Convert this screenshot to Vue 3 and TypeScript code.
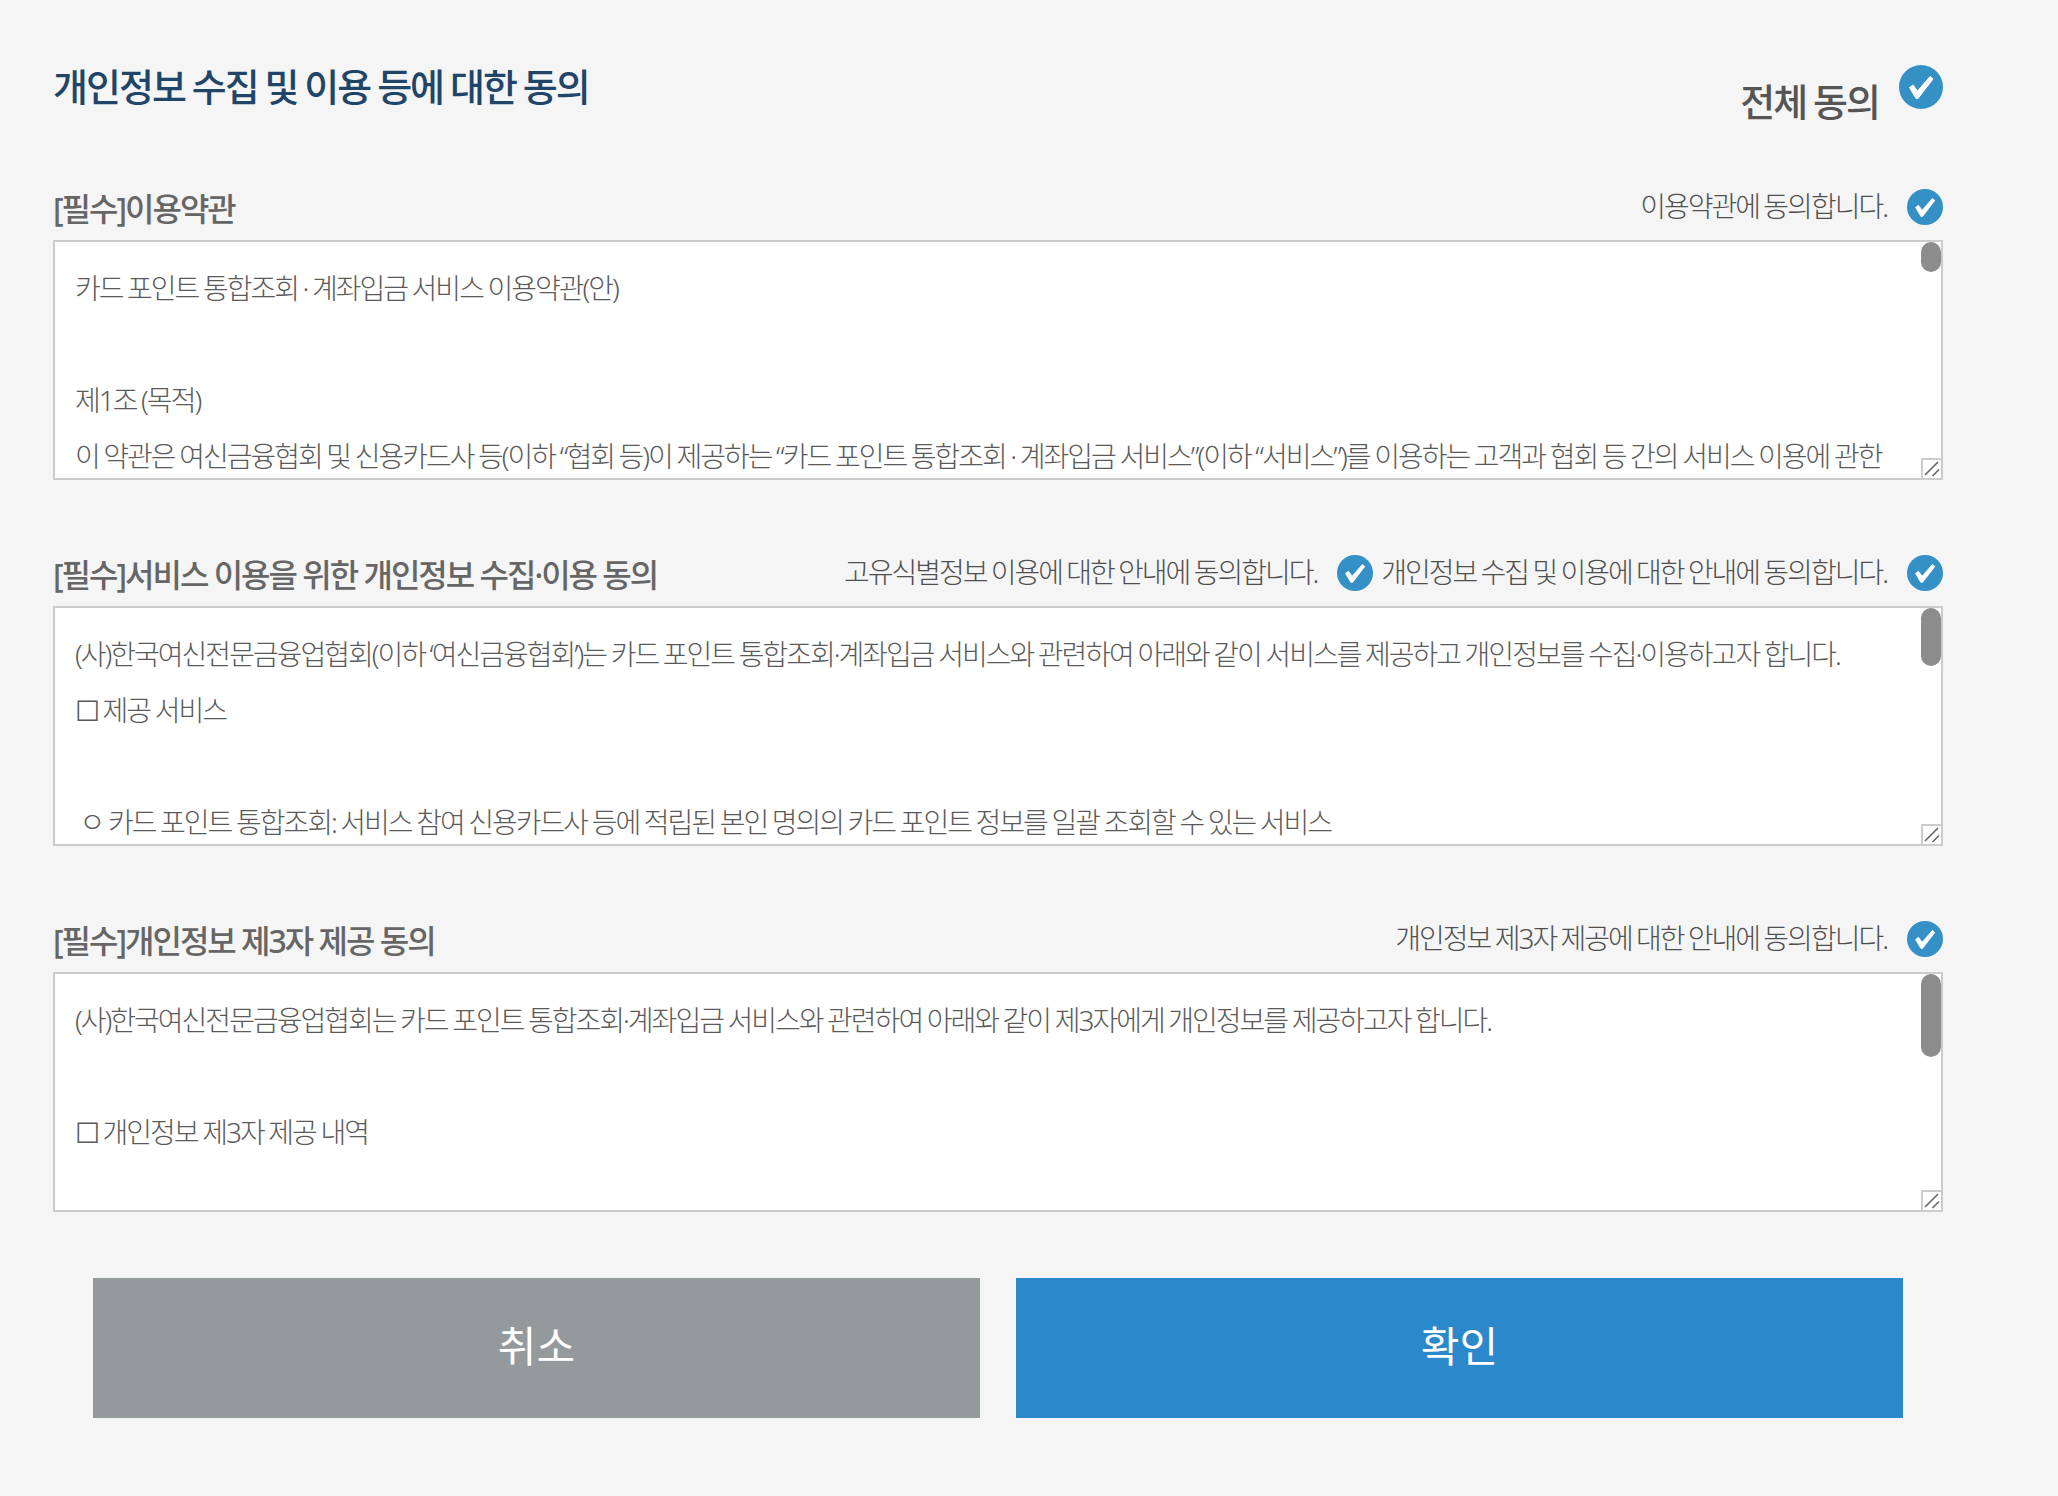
<script setup lang="ts">
interface Agree { text: string }
interface Section { title: string; agrees: Agree[]; lines: string[]; thumb: number }
const sections: Section[] = [
  {
    title: '[필수]이용약관',
    agrees: [{ text: '이용약관에 동의합니다.' }],
    thumb: 30,
    lines: [
      '카드 포인트 통합조회 · 계좌입금 서비스 이용약관(안)',
      '',
      '제1조 (목적)',
      '이 약관은 여신금융협회 및 신용카드사 등(이하 “협회 등)이 제공하는 “카드 포인트 통합조회 · 계좌입금 서비스”(이하 “서비스”)를 이용하는 고객과 협회 등 간의 서비스 이용에 관한',
    ],
  },
  {
    title: '[필수]서비스 이용을 위한 개인정보 수집·이용 동의',
    agrees: [{ text: '고유식별정보 이용에 대한 안내에 동의합니다.' }, { text: '개인정보 수집 및 이용에 대한 안내에 동의합니다.' }],
    thumb: 58,
    lines: [
      "(사)한국여신전문금융업협회(이하 ‘여신금융협회’)는 카드 포인트 통합조회·계좌입금 서비스와 관련하여 아래와 같이 서비스를 제공하고 개인정보를 수집·이용하고자 합니다.",
      '☐ 제공 서비스',
      '',
      ' ㅇ 카드 포인트 통합조회: 서비스 참여 신용카드사 등에 적립된 본인 명의의 카드 포인트 정보를 일괄 조회할 수 있는 서비스',
    ],
  },
  {
    title: '[필수]개인정보 제3자 제공 동의',
    agrees: [{ text: '개인정보 제3자 제공에 대한 안내에 동의합니다.' }],
    thumb: 83,
    lines: [
      '(사)한국여신전문금융업협회는 카드 포인트 통합조회·계좌입금 서비스와 관련하여 아래와 같이 제3자에게 개인정보를 제공하고자 합니다.',
      '',
      '☐ 개인정보 제3자 제공 내역',
    ],
  },
]
</script>

<template>
  <div class="page">
    <header class="top">
      <h1 class="title">개인정보 수집 및 이용 등에 대한 동의</h1>
      <div class="all">
        <span class="all-label">전체 동의</span>
        <svg class="check big" viewBox="0 0 44 44" aria-hidden="true">
          <circle cx="22" cy="22" r="22" fill="#3590c6" />
          <path d="M10.5 22.5 L14 20 L18.5 26 L31 11.5 L34 14 L19 33.5 L17 33.5 Z" fill="#fff" stroke="#fff" stroke-width="1" stroke-linejoin="round" />
        </svg>
      </div>
    </header>
    <section v-for="s in sections" :key="s.title" class="section">
      <div class="head">
        <h2 class="label">{{ s.title }}</h2>
        <div class="agrees">
          <div v-for="a in s.agrees" :key="a.text" class="agree">
            <span>{{ a.text }}</span>
            <svg class="check" viewBox="0 0 44 44" aria-hidden="true">
              <circle cx="22" cy="22" r="22" fill="#3590c6" />
              <path d="M10.5 22.5 L14 20 L18.5 26 L31 11.5 L34 14 L19 33.5 L17 33.5 Z" fill="#fff" stroke="#fff" stroke-width="1" stroke-linejoin="round" />
            </svg>
          </div>
        </div>
      </div>
      <div class="box">
        <p v-for="(l, i) in s.lines" :key="i" class="line">{{ l }}</p>
        <span class="thumb" :style="{ height: s.thumb + 'px' }"></span>
        <span class="resizer">
          <svg viewBox="0 0 18 18" width="18" height="18" aria-hidden="true">
            <path d="M2 15 L15 2 M9.5 16 L16 9.5" stroke="#666" stroke-width="1.6" fill="none" />
          </svg>
        </span>
      </div>
    </section>
    <div class="buttons">
      <button class="btn cancel" type="button">취소</button>
      <button class="btn ok" type="button">확인</button>
    </div>
  </div>
</template>

<style scoped>
.page {
  width: 2058px;
  height: 1496px;
  box-sizing: border-box;
  padding: 0 115px 0 53px;
  background: #f5f5f5;
  font-family: "Noto Sans", "Noto Sans CJK KR", sans-serif;
  overflow: hidden;
}
.top {
  display: flex;
  justify-content: space-between;
  height: 114px;
  padding-top: 56px;
  box-sizing: border-box;
}
.title {
  margin: 0;
  font-size: 38px;
  line-height: 60px;
  height: 60px;
  font-weight: 500;
  letter-spacing: -2px;
  word-spacing: -1px;
  color: #1f4568;
}
.all {
  display: flex;
  align-items: flex-start;
  gap: 20px;
  margin-top: 9px;
}
.all-label {
  font-size: 38px;
  line-height: 54px;
  margin-top: 9px;
  font-weight: 500;
  letter-spacing: -2px;
  word-spacing: -1px;
  color: #555;
}
.section { display: block; }
.head {
  display: flex;
  justify-content: space-between;
  align-items: flex-end;
  height: 126px;
  padding-bottom: 14px;
  box-sizing: border-box;
}
.label {
  margin: 0 0 -6px;
  font-size: 32px;
  line-height: 46px;
  font-weight: 500;
  letter-spacing: -2px;
  color: #666;
}
.agrees { display: flex; gap: 8px; }
.agree {
  display: flex;
  align-items: center;
  gap: 20px;
  font-size: 28px;
  line-height: 40px;
  letter-spacing: -2px;
  word-spacing: -1px;
  font-weight: 300;
  color: #4f4f4f;
}
.agree span { margin-top: -1px; }
.check { width: 36px; height: 36px; flex: none; position: relative; top: 0; }
.check.big { width: 44px; height: 44px; top: 0; }
.box {
  position: relative;
  height: 240px;
  box-sizing: border-box;
  border: 2px solid #ccc;
  background: #fff;
  padding: 18px 20px 0;
  overflow: hidden;
}
.line {
  margin: 0;
  height: 56px;
  line-height: 56px;
  font-size: 28px;
  font-weight: 300;
  letter-spacing: -2px;
  word-spacing: -0.7px;
  color: #5a5a5a;
  white-space: pre;
}
.thumb {
  position: absolute;
  top: 0;
  right: 0;
  width: 20px;
  border-radius: 10px;
  background: #8c8c8c;
}
.resizer {
  position: absolute;
  right: 0;
  bottom: 0;
  width: 20px;
  height: 20px;
  box-sizing: border-box;
  border-top: 2px solid #ccc;
  border-left: 2px solid #ccc;
  background: #fff;
  display: block;
}
.resizer svg { display: block; }
.buttons {
  display: flex;
  gap: 36px;
  margin: 66px 0 0 40px;
  width: 1810px;
}
.btn {
  flex: 1;
  height: 140px;
  border: 0;
  color: #fff;
  font-family: inherit;
  font-size: 42px;
  font-weight: 400;
  padding: 0 0 10px;
}
.cancel { background: #94999c; }
.ok { background: #2b89cb; }
</style>
